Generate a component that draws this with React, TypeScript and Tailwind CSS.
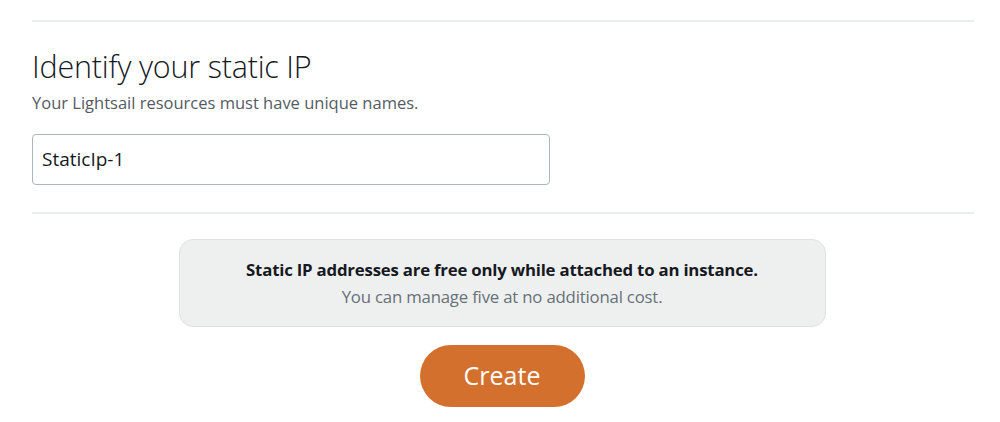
import React from "react";

export default function App() {
  return (
    <div className="w-[1000px] h-[422px] bg-white overflow-hidden" style={{ fontFamily: '"Open Sans", "Noto Sans", sans-serif' }}>
      <div className="pl-[32px] pr-[26px] pt-[20px]">
        <div className="h-[2px] bg-[#eaeded]" />
        <h1 className="mt-[26px] text-[30.5px] leading-[36px] font-light text-[#16191f] tracking-[-0.2px]">Identify your static IP</h1>
        <p className="mt-[9px] text-[16.5px] leading-[20px] text-[#545b64]">Your Lightsail resources must have unique names.</p>
        <div className="mt-[21px] w-[518px] h-[51px] border border-[#aab7b8] rounded-[4px] flex items-center px-[9px]">
          <span className="text-[19px] text-[#16191f]">StaticIp-1</span>
        </div>
        <div className="mt-[27px] h-[2px] bg-[#eaeded]" />
      </div>
      <div className="flex flex-col items-center mt-[25px] pl-[4px]">
        <div className="w-[647px] h-[88px] rounded-[14px] bg-[#eef0f0] border border-[#dfe2e2] flex flex-col items-center justify-center">
          <p className="text-[16.8px] leading-[22px] font-bold text-[#16191f] tracking-[-0.2px]">Static IP addresses are free only while attached to an instance.</p>
          <p className="mt-[5px] text-[16.8px] leading-[22px] text-[#687078] tracking-[-0.2px]">You can manage five at no additional cost.</p>
        </div>
        <div className="mt-[18px] w-[165px] h-[62px] rounded-full bg-[#d4702e] flex items-center justify-center">
          <span className="text-[25px] text-white">Create</span>
        </div>
      </div>
    </div>
  );
}
